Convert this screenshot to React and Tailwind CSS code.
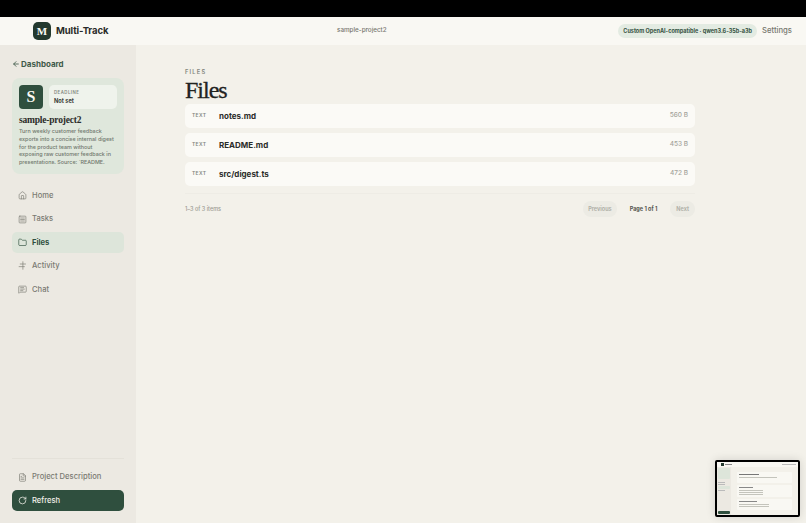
import { ArrowLeft, House, SquareMenu, Folder, MessageSquareText, FileText, RotateCw } from "lucide-react";

function ActivityIcon({ size, strokeWidth }) {
  return (
    <svg width={size} height={size} viewBox="0 0 24 24" fill="none" stroke="currentColor" strokeWidth={strokeWidth} strokeLinecap="round">
      <path d="M13 2v20" />
      <path d="M6 8h14" />
      <path d="M3 15h14" />
    </svg>
  );
}

const navItems = [
  { label: "Home", icon: House },
  { label: "Tasks", icon: SquareMenu },
  { label: "Files", icon: Folder, active: true },
  { label: "Activity", icon: ActivityIcon },
  { label: "Chat", icon: MessageSquareText },
];

const files = [
  { name: "notes.md", size: "560 B" },
  { name: "README.md", size: "453 B" },
  { name: "src/digest.ts", size: "472 B" },
];

function Preview() {
  return (
    <div className="absolute bottom-[6px] right-[6px] flex h-[57px] w-[85px] flex-col overflow-hidden rounded-[2px] border-2 border-black bg-[#f3f1ea] shadow-[0_0_10px_rgba(0,0,0,0.14)]">
      <div className="flex h-[5px] shrink-0 items-center gap-px bg-[#f9f8f3] pl-[4px]">
        <div className="h-[3px] w-[3px] bg-[#23392e]" />
        <div className="h-px w-[7px] bg-[#888]" />
        <div className="ml-auto mr-[2px] h-px w-[14px] bg-[#bbb]" />
      </div>
      <div className="flex min-h-0 flex-1">
        <div className="flex w-[14px] shrink-0 flex-col bg-[#ece9e2] p-px">
          <div className="h-[11px] rounded-[1px] bg-[#dde5da]" />
          <div className="mt-[3px] h-px w-[7px] bg-[#bbb]" />
          <div className="mt-px h-px w-[7px] bg-[#bbb]" />
          <div className="mt-px h-[3px] rounded-[1px] bg-[#dde5da]" />
          <div className="mt-px h-px w-[7px] bg-[#bbb]" />
          <div className="mt-auto h-[3px] rounded-[1px] bg-[#2f4f3e]" />
        </div>
        <div className="flex min-w-0 flex-1 flex-col px-[6px] py-[5px]">
          <div className="h-[13px] rounded-[1px] bg-[#f9f8f3] p-[2px]">
            <div className="h-px w-[20px] bg-[#777]" />
            <div className="mt-[2px] h-px w-[38px] bg-[#c4c4bc]" />
          </div>
          <div className="mt-[2px] h-[16px] rounded-[1px] bg-[#f9f8f3] p-[2px]">
            <div className="h-px w-[14px] bg-[#888]" />
            <div className="mt-[2px] h-px w-[24px] bg-[#c4c4bc]" />
            <div className="mt-px h-px w-[24px] bg-[#c4c4bc]" />
            <div className="mt-px h-px w-[24px] bg-[#c4c4bc]" />
          </div>
          <div className="mt-[2px] h-[13px] rounded-[1px] bg-[#f9f8f3] p-[2px]">
            <div className="h-px w-[18px] bg-[#888]" />
            <div className="mt-[2px] h-px w-[30px] bg-[#c4c4bc]" />
            <div className="mt-px h-px w-[30px] bg-[#c4c4bc]" />
          </div>
        </div>
      </div>
    </div>
  );
}

export default function App() {
  return (
    <div className="relative flex h-[523px] w-[806px] flex-col overflow-hidden bg-[#f3f1ea] font-['Inter',sans-serif] text-[#2a2b28]">
      <div className="h-[17px] shrink-0 bg-black" />
      <header className="flex h-[28px] shrink-0 items-center bg-[#f9f8f3] pl-[33px] pr-[14px]">
        <div className="flex w-[304px] items-center gap-[5px]">
          <div className="flex h-[18px] w-[18px] items-center justify-center rounded-[5px] bg-[#23392e] font-['Liberation_Serif',serif] text-[11px] font-bold text-[#f9f8f3]">
            M
          </div>
          <span className="text-[9.5px] font-bold tracking-[-0.1px]">Multi-Track</span>
        </div>
        <span className="text-[6.3px] font-medium text-[#77776f]">sample-project2</span>
        <div className="ml-auto flex items-center gap-[5px]">
          <span className="rounded-full bg-[#e3ebe2] px-[5px] py-[3px] text-[5.5px] font-bold text-[#35523f]">
            Custom OpenAI-compatible · qwen3.6-35b-a3b
          </span>
          <span className="text-[7.7px] font-medium text-[#77776f]">Settings</span>
        </div>
      </header>

      <div className="flex min-h-0 flex-1">
        <aside className="flex w-[136px] shrink-0 flex-col bg-[#ece9e2] px-[12px] pb-[12px] pt-[13px]">
          <div className="flex items-center gap-[1px] text-[8px] font-bold text-[#3f5a49]">
            <ArrowLeft size={8} strokeWidth={2.5} />
            Dashboard
          </div>
          <div className="mt-[8px] rounded-[8px] bg-[#dfe7dc] px-[7px] pb-[7px] pt-[7px]">
            <div className="flex gap-[6px]">
              <div className="flex h-[24px] w-[24px] shrink-0 items-center justify-center rounded-[4px] bg-[#2f4f3e] font-['Liberation_Serif',serif] text-[16px] font-bold text-[#f9f8f3]">
                S
              </div>
              <div className="flex-1 rounded-[5px] bg-[#eff3ec] px-[5px] py-[4px]">
                <div className="text-[4.3px] font-semibold leading-[7px] tracking-[0.5px] text-[#83877e]">DEADLINE</div>
                <div className="mt-[1px] text-[5.7px] font-bold leading-[8px] text-[#3a3d38]">Not set</div>
              </div>
            </div>
            <div className="mt-[5px] font-['Liberation_Serif',serif] text-[9.5px] font-bold leading-[12px] tracking-[-0.2px] text-[#2a2b28]">
              sample-project2
            </div>
            <p className="mt-[2px] text-[5.4px] font-medium leading-[7.8px] text-[#70776e]">
              Turn weekly customer feedback exports into a concise internal digest for the product team without exposing raw customer feedback in presentations. Source: `README.
            </p>
          </div>
          <nav className="mt-[11px] flex flex-col gap-[2px]">
            {navItems.map((item) => (
              <div
                key={item.label}
                className={
                  item.active
                    ? "flex h-[21.4px] items-center gap-[5px] rounded-[5px] bg-[#dde5da] pl-[6px] text-[7.6px] font-bold text-[#2f4f3e]"
                    : "flex h-[21.4px] items-center gap-[5px] rounded-[5px] pl-[6px] text-[7.6px] font-medium text-[#7a7a72]"
                }
              >
                <item.icon size={9} strokeWidth={1.75} />
                {item.label}
              </div>
            ))}
          </nav>
          <div className="mt-auto border-t border-[#e4e1d9] pt-[7px]">
            <div className="flex h-[22px] items-center gap-[5px] pl-[6px] text-[7.6px] font-medium text-[#7a7a72]">
              <FileText size={9} strokeWidth={1.75} />
              Project Description
            </div>
            <div className="mt-[2px] flex h-[21px] items-center gap-[5px] rounded-[5px] bg-[#2f4f3e] pl-[6px] text-[7.6px] font-medium text-[#f3f1ea]">
              <RotateCw size={9} strokeWidth={2} />
              Refresh
            </div>
          </div>
        </aside>

        <main className="min-w-0 flex-1 pl-[49px] pr-[111px] pt-[23px]">
          <div className="text-[5.7px] font-semibold leading-[8px] tracking-[1.2px] text-[#83877e]">FILES</div>
          <h1 className="font-['Liberation_Serif',serif] text-[24px] leading-[28px] tracking-[-1px] text-[#22231f] [-webkit-text-stroke:0.3px_#22231f]">Files</h1>
          <div className="flex flex-col gap-[5px]">
            {files.map((file) => (
              <div key={file.name} className="flex h-[24px] items-center rounded-[5px] bg-[#fbfaf6] pl-[7px] pr-[7px]">
                <span className="w-[27px] text-[5px] font-semibold tracking-[0.3px] text-[#83877e]">TEXT</span>
                <span className="text-[8px] font-bold text-[#2a2b28]">{file.name}</span>
                <span className="ml-auto text-[6.5px] font-medium text-[#a3a39b]">{file.size}</span>
              </div>
            ))}
          </div>
          <div className="mt-[7px] flex items-center border-t border-[#eeece5] pt-[7px]">
            <span className="text-[5.5px] font-medium text-[#9a9a92]">1–3 of 3 items</span>
            <div className="ml-auto flex items-center gap-[10px] text-[5.5px] font-bold">
              <span className="rounded-full bg-[#ecebe4] px-[5px] py-[4px] text-[#b1b1a9]">Previous</span>
              <span className="px-[3px] text-[#55564f]">Page 1 of 1</span>
              <span className="rounded-full bg-[#ecebe4] px-[6px] py-[4px] text-[#b1b1a9]">Next</span>
            </div>
          </div>
        </main>
      </div>
      <Preview />
    </div>
  );
}
